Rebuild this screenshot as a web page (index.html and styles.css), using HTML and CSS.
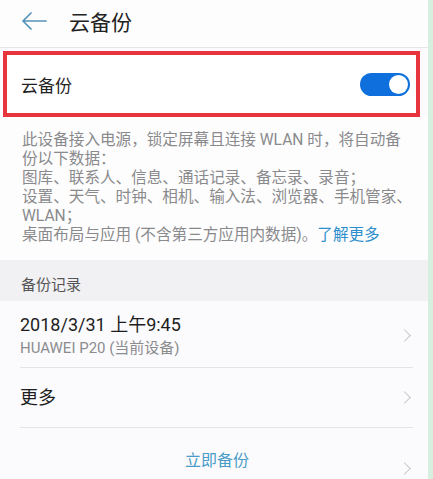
FILE: index.html
```html
<!DOCTYPE html>
<html lang="zh-CN">
<head>
  <meta charset="UTF-8" />
  <meta name="viewport" content="width=device-width, initial-scale=1" />
  <title>云备份</title>
  <link rel="stylesheet" href="styles.css">
</head>
<body>
  <div class="screen">
    <header class="topbar">
      <svg class="back" width="26" height="18" viewBox="0 0 26 18">
        <path d="M25 9H2M10 1L2 9l8 8" fill="none" stroke="#5592b8" stroke-width="1.7" stroke-linecap="round" stroke-linejoin="round"/>
      </svg>
      <span class="title">云备份</span>
    </header>

    <div class="switch-row">
      <span>云备份</span>
      <span class="toggle"><span class="knob"></span></span>
    </div>

    <p class="description">
      <span>此设备接入电源，锁定屏幕且连接 WLAN 时，将自动备</span>
      <span>份以下数据：</span>
      <span>图库、联系人、信息、通话记录、备忘录、录音；</span>
      <span>设置、天气、时钟、相机、输入法、浏览器、手机管家、</span>
      <span>WLAN；</span>
      <span>桌面布局与应用 (不含第三方应用内数据)。<a class="link">了解更多</a></span>
    </p>

    <div class="section-title">备份记录</div>

    <div class="list-item record">
      <div class="item-text">
        <div class="item-title">2018/3/31 上午9:45</div>
        <div class="item-sub">HUAWEI P20 (当前设备)</div>
      </div>
      <span class="chevron"></span>
    </div>

    <div class="list-item more">
      <div class="item-title">更多</div>
      <span class="chevron"></span>
    </div>

    <div class="backup-now">
      <span class="backup-btn">立即备份</span>
      <span class="chevron low"></span>
    </div>
  </div>
</body>
</html>
```

FILE: styles.css
```css
* {
  box-sizing: border-box;
}
body {
  margin: 0;
  background: #d8eede;
  font-family: Roboto, "Noto Sans CJK SC", sans-serif;
  color: #222;
}
.screen {
  width: 428px;
  height: 479px;
  background: #fbfbfd;
  overflow: hidden;
}
.topbar {
  height: 48px;
  display: flex;
  align-items: center;
  padding: 0 0 5px 21px;
  border-bottom: 1px solid #e6e6ea;
  background: #fdfdfe;
}
.title {
  margin-left: 22px;
  font-size: 21px;
  color: #222;
}
.switch-row {
  margin: 3px 8px 0 3px;
  height: 66px;
  border: 4px solid #e8343c;
  background: #fff;
  display: flex;
  align-items: center;
  justify-content: space-between;
  padding: 0 6px 0 14px;
  font-size: 17px;
}
.toggle {
  width: 50px;
  height: 23px;
  border-radius: 12px;
  background: #0f6fdc;
  display: flex;
  align-items: center;
  justify-content: flex-end;
  padding-right: 2px;
}
.knob {
  width: 19px;
  height: 19px;
  border-radius: 50%;
  background: #fff;
}
.description {
  margin: 0;
  padding: 14px 10px 15px 22px;
  font-size: 15.6px;
  line-height: 19px;
  color: #8a8a8c;
  background: #fdfdfe;
}
.description span {
  display: block;
  white-space: nowrap;
}
.link {
  color: #2f8fcc;
}
.section-title {
  height: 41px;
  padding: 16px 0 0 21px;
  font-size: 15px;
  line-height: 18px;
  color: #555;
  background: #f1f1f4;
}
.list-item {
  margin: 0 15px 0 20px;
  display: flex;
  align-items: center;
  justify-content: space-between;
  border-bottom: 1px solid #e4e4e8;
}
.record {
  height: 67px;
  padding-top: 3px;
}
.more {
  height: 60px;
}
.item-title {
  font-size: 18px;
  line-height: 22px;
  color: #1e1e1e;
}
.item-sub {
  margin-top: 3px;
  font-size: 15px;
  line-height: 18px;
  color: #8c8c8e;
}
.chevron {
  width: 9px;
  height: 9px;
  margin-right: 4px;
  border-top: 1.5px solid #c6c6ca;
  border-right: 1.5px solid #c6c6ca;
  transform: rotate(45deg);
}
.backup-now {
  height: 51px;
  margin: 0 15px 0 20px;
  display: flex;
  align-items: center;
  justify-content: space-between;
  padding-left: 165px;
}
.backup-btn {
  font-size: 16px;
  color: #4a9cc8;
  margin-top: 10px;
}
.chevron.low {
  margin-top: 30px;
}
```
